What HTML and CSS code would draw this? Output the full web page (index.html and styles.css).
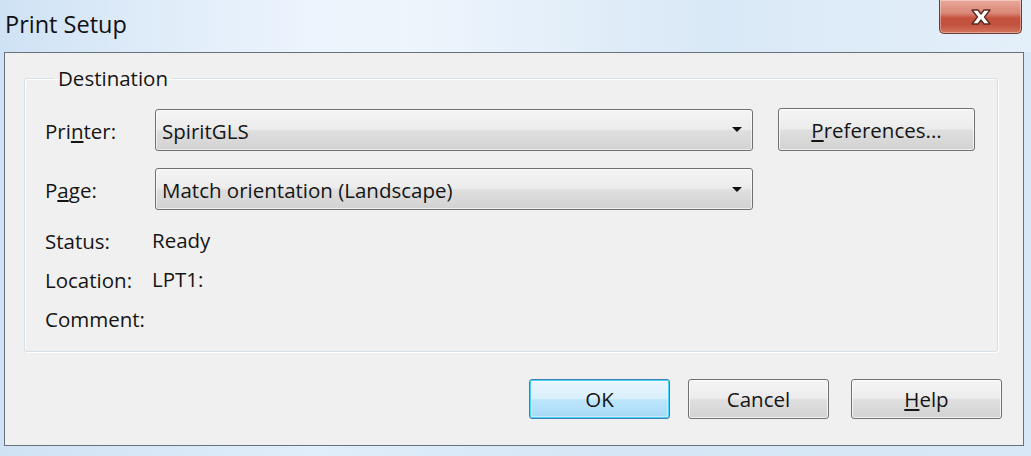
FILE: index.html
```html
<!DOCTYPE html>
<html>
<head>
<meta charset="utf-8">
<title>Print Setup</title>
<link rel="stylesheet" href="styles.css">
</head>
<body>
<div class="window">
  <div class="titlebar">
    <span class="title">Print Setup</span>
    <button class="close" aria-label="Close">
      <svg width="28" height="18" viewBox="0 0 28 18">
        <path d="M5 2 L11 2 L14 6 L17 2 L23 2 L17.5 9 L23 16 L17 16 L14 12 L11 16 L5 16 L10.5 9 Z" fill="#ffffff" stroke="#5a2a22" stroke-width="1.3" stroke-linejoin="round"/>
      </svg>
    </button>
  </div>
  <div class="client">
    <fieldset class="group">
      <legend>Destination</legend>
      <div class="form">
        <span class="label">Pri<u>n</u>ter:</span>
        <div class="combo"><span>SpiritGLS</span><i class="arrow"></i></div>
        <button class="btn">
          <u>P</u>references...
        </button>
        <span class="label">P<u>a</u>ge:</span>
        <div class="combo"><span>Match orientation (Landscape)</span><i class="arrow"></i></div>
        <span></span>
      </div>
      <div class="info">
        <span class="label">Status:</span><span>Ready</span>
        <span class="label">Location:</span><span>LPT1:</span>
        <span class="label">Comment:</span><span></span>
      </div>
    </fieldset>
    <div class="actions">
      <button class="btn default ok">OK</button>
      <button class="btn cancel">Cancel</button>
      <button class="btn help"><u>H</u>elp</button>
    </div>
  </div>
</div>
</body>
</html>
```

FILE: styles.css
```css
* { box-sizing: border-box; }
html, body {
  margin: 0;
  padding: 0;
}
body {
  width: 1031px;
  height: 456px;
  overflow: hidden;
  background: linear-gradient(90deg, #cfe2f5 0%, #e0edfa 30%, #d5e6f6 60%, #d8e8f7 100%);
  font-family: "Open Sans", "Noto Sans", "Liberation Sans", sans-serif;
  font-size: 20.5px;
  color: #151515;
}
.window {
  display: flex;
  flex-direction: column;
  height: 456px;
}
.titlebar {
  height: 52px;
  display: flex;
  justify-content: space-between;
  align-items: flex-start;
  padding-left: 5px;
  padding-right: 9px;
  background: linear-gradient(90deg, rgba(255,255,255,0.0) 0%, rgba(255,255,255,0.5) 40%, rgba(255,255,255,0.1) 70%, rgba(255,255,255,0.3) 100%);
}
.title {
  font-size: 23.5px;
  line-height: 24px;
  margin-top: 12px;
  color: #111;
}
.close {
  width: 83px;
  height: 34px;
  margin: 0;
  padding: 0;
  border: 1px solid #6e3a32;
  border-top: none;
  border-radius: 0 0 5px 5px;
  background: linear-gradient(180deg, #e9a99b 0%, #d98676 40%, #c4513c 55%, #c2523f 75%, #d4755e 100%);
  box-shadow: inset 0 0 0 1px rgba(255,255,255,0.35);
  display: flex;
  align-items: center;
  justify-content: center;
}
.client {
  height: 394px;
  margin: 0 7px 0 4px;
  border: 1px solid #68707a;
  background: #f0f0f0;
  display: flex;
  flex-direction: column;
  padding: 12px 0 0 19px;
}
.group {
  width: 974px;
  margin: 0;
  padding: 0 0 14px 20px;
  border: 1px solid #d5dfe5;
  border-radius: 3px;
  box-shadow: inset 1px 1px 0 #ffffff, 1px 1px 0 #ffffff;
  min-width: 0;
}
.group legend {
  margin-left: 9px;
  padding: 0 4px;
  line-height: 26px;
}
.form {
  display: grid;
  grid-template-columns: 85px 598px 197px;
  column-gap: 25px;
  row-gap: 17px;
  margin-top: 17px;
  align-items: center;
}
.label { padding-top: 2px; }
.combo {
  height: 42px;
  border: 1px solid #707070;
  border-radius: 3px;
  background: linear-gradient(180deg, #f4f4f4 0%, #ececec 48%, #dfdfdf 52%, #d2d2d2 100%);
  box-shadow: inset 0 0 0 1px rgba(255,255,255,0.6);
  display: flex;
  align-items: center;
  justify-content: space-between;
  padding: 2px 10px 0 6px;
}
.arrow {
  width: 0;
  height: 0;
  border-left: 5px solid transparent;
  border-right: 5px solid transparent;
  border-top: 5px solid #111;
  margin-top: -2px;
}
.btn {
  font: inherit;
  color: #151515;
  height: 43px;
  margin: 0;
  padding: 0;
  border: 1px solid #707070;
  border-radius: 3px;
  background: linear-gradient(180deg, #f4f4f4 0%, #ececec 48%, #dfdfdf 52%, #d2d2d2 100%);
  box-shadow: inset 0 0 0 1px rgba(255,255,255,0.7);
}
.info {
  display: grid;
  grid-template-columns: 107px auto;
  grid-auto-rows: 39px;
  align-items: center;
  margin-top: 10px;
}
.actions {
  display: flex;
  justify-content: flex-end;
  gap: 18px;
  margin-top: 27px;
  padding-right: 21px;
}
.actions .btn {
  height: 40px;
  width: 141px;
}
.actions .help {
  width: 151px;
  margin-left: 4px;
}
.btn.default {
  border-color: #3c7fb1;
  background: linear-gradient(180deg, #eaf6fd 0%, #d9f0fc 48%, #bee6fd 52%, #a7d9f5 100%);
  box-shadow: inset 0 0 0 1px #48d3f8, inset 0 0 0 2px rgba(255,255,255,0.4);
}
u { text-decoration: underline; text-underline-offset: 2px; }
```
